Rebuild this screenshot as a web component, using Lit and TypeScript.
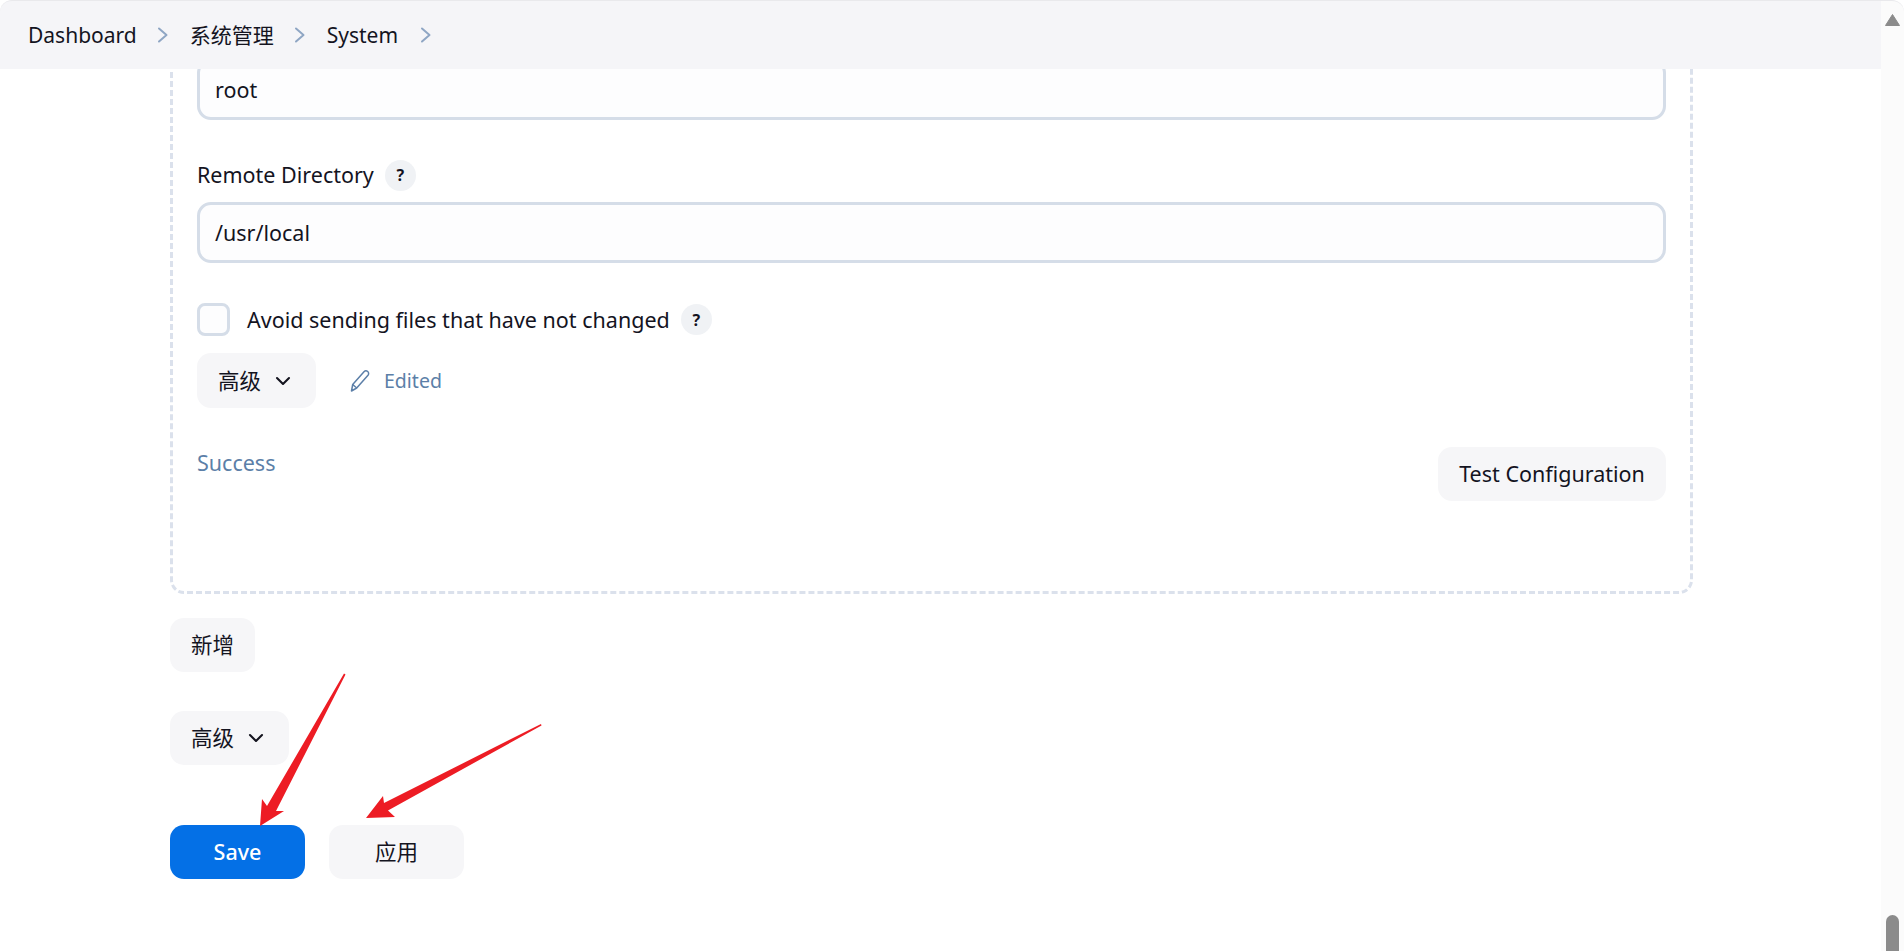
import { LitElement, html, css, svg } from "lit";
import { customElement } from "lit/decorators.js";

const chevronRight = svg`<svg class="crumb-chev" width="14" height="18" viewBox="0 0 14 18" fill="none"><path d="M3 2.5 10.5 9 3 15.5" stroke="#8fa6c4" stroke-width="2" stroke-linecap="round" stroke-linejoin="round"/></svg>`;
const chevronDown = svg`<svg class="down" width="16" height="10" viewBox="0 0 16 10" fill="none"><path d="M2 2l6 6 6-6" stroke="#14141f" stroke-width="2.1" stroke-linecap="round" stroke-linejoin="round"/></svg>`;
const pencil = svg`<svg width="21" height="24" viewBox="0 0 21 24" fill="none"><path d="M1.5 22l1.2-6.5L14 2.8c1-1.1 2.6-1.2 3.7-.3s1.2 2.6.3 3.7L6.7 19z M2.7 15.5l4 3.5 M1.5 22l5.2-3" stroke="#5c7fa8" stroke-width="1.5" stroke-linecap="round" stroke-linejoin="round"/></svg>`;

@customElement("app-root")
export class AppRoot extends LitElement {
  static styles = css`
    :host {
      display: flex;
      width: 1904px;
      height: 951px;
      overflow: hidden;
      position: relative;
      background: #fff;
      color: #14141f;
      font-family: "Noto Sans", "Noto Sans CJK SC", sans-serif;
      font-size: 21.5px;
      line-height: 30px;
    }
    .page {
      width: 1881px;
      height: 951px;
      display: flex;
      flex-direction: column;
    }
    .crumbs {
      flex: none;
      height: 68px;
      display: flex;
      align-items: center;
      padding-left: 28px;
      background: #f5f5f8;
      border-top: 1px solid #e9e9ec;
      border-top-left-radius: 12px;
      font-size: 21px;
    }
    .crumb-chev { margin: 0 20px 0 19px; }
    .crumb-chev:last-child { margin-left: 21px; }
    .main {
      flex: 1;
      min-height: 0;
      overflow: hidden;
      padding-left: 170px;
    }
    .repeat {
      box-sizing: border-box;
      width: 1523px;
      margin-top: -30px;
      padding: 17px 24px 90px 24px;
      border: 3px dashed #dbe1ec;
      border-radius: 14px;
      display: flex;
      flex-direction: column;
    }
    .input {
      box-sizing: border-box;
      height: 61px;
      padding: 0 15px;
      display: flex;
      align-items: center;
      border: 3px solid #d5dde8;
      border-radius: 14px;
      background: #fdfdfe;
    }
    .label {
      margin-top: 40px;
      margin-bottom: 12px;
      height: 30px;
      display: flex;
      align-items: center;
      gap: 11px;
    }
    .help {
      width: 31px;
      height: 31px;
      flex: none;
      border-radius: 50%;
      background: #f0f2f5;
      font-size: 16px;
      font-weight: 700;
      display: flex;
      align-items: center;
      justify-content: center;
    }
    .check-row {
      margin-top: 40px;
      height: 33px;
      display: flex;
      align-items: center;
    }
    .checkbox {
      box-sizing: border-box;
      width: 33px;
      height: 33px;
      border: 3px solid #d5dde8;
      border-radius: 8px;
      background: #fdfdfe;
      margin-right: 17px;
    }
    .check-row .help { margin-left: 11px; }
    .adv-row {
      margin-top: 17px;
      display: flex;
      align-items: center;
    }
    .btn {
      box-sizing: border-box;
      height: 54px;
      display: inline-flex;
      align-items: center;
      justify-content: center;
      border-radius: 14px;
      background: #f6f6f8;
      white-space: nowrap;
    }
    .adv {
      width: 119px;
      gap: 14px;
      justify-content: flex-start;
      padding-left: 21px;
    }
    .adv-row .adv { height: 55px; }
    .edited {
      margin-left: 34px;
      display: flex;
      align-items: center;
      gap: 13px;
      color: #5c7fa8;
      font-size: 19.5px;
    }
    .result-row {
      margin-top: 39px;
      display: flex;
      justify-content: space-between;
      align-items: flex-start;
    }
    .success { color: #5c7fa8; margin-top: 1px; }
    .test { width: 228px; }
    .after {
      display: flex;
      flex-direction: column;
      align-items: flex-start;
    }
    .add { width: 85px; margin-top: 24px; }
    .adv2 { margin-top: 39px; }
    .actions {
      margin-top: 60px;
      display: flex;
      gap: 24px;
    }
    .actions .btn { width: 135px; }
    .primary { background: #0470e6; color: #fff; font-weight: 500; }
    .scrollbar {
      flex: none;
      width: 23px;
      height: 951px;
      box-sizing: border-box;
      background: #fbfbfb;
      border-top: 1px solid #e9e9ec;
      border-top-right-radius: 12px;
      display: flex;
      flex-direction: column;
      justify-content: space-between;
      align-items: center;
    }
    .arrow { margin-top: 13px; }
    .thumb {
      width: 13px;
      height: 36px;
      border-radius: 7px 7px 0 0;
      background: #8b8b8b;
    }
    .annot {
      position: absolute;
      left: 0;
      top: 0;
      pointer-events: none;
    }
  `;

  render() {
    return html`
      <div class="page">
        <nav class="crumbs">
          <span>Dashboard</span>${chevronRight}
          <span>系统管理</span>${chevronRight}
          <span>System</span>${chevronRight}
        </nav>
        <div class="main">
          <div class="repeat">
            <div class="input">root</div>
            <div class="label">Remote Directory <span class="help">?</span></div>
            <div class="input">/usr/local</div>
            <div class="check-row">
              <span class="checkbox"></span>
              Avoid sending files that have not changed
              <span class="help">?</span>
            </div>
            <div class="adv-row">
              <span class="btn adv">高级 ${chevronDown}</span>
              <span class="edited">${pencil} Edited</span>
            </div>
            <div class="result-row">
              <span class="success">Success</span>
              <span class="btn test">Test Configuration</span>
            </div>
          </div>
          <div class="after">
            <span class="btn add">新增</span>
            <span class="btn adv adv2">高级 ${chevronDown}</span>
            <div class="actions">
              <span class="btn primary">Save</span>
              <span class="btn">应用</span>
            </div>
          </div>
        </div>
      </div>
      <div class="scrollbar">
        <svg class="arrow" width="15" height="12" viewBox="0 0 15 12"><path d="M7.5 0.5 14.5 11.5H0.5z" fill="#8b8b8b" stroke="#8b8b8b" stroke-linejoin="round"/></svg>
        <div class="thumb"></div>
      </div>
      <svg class="annot" width="1904" height="951" viewBox="0 0 1904 951">
        <path d="M344 673.5 345.5 674.5 276 811 284 811 260 826 262 799 267 806z" fill="#ed1c24"/>
        <path d="M541 724 541.5 725.5 388 810.5 395 817 366 818 383 796 384 803z" fill="#ed1c24"/>
      </svg>
    `;
  }
}
